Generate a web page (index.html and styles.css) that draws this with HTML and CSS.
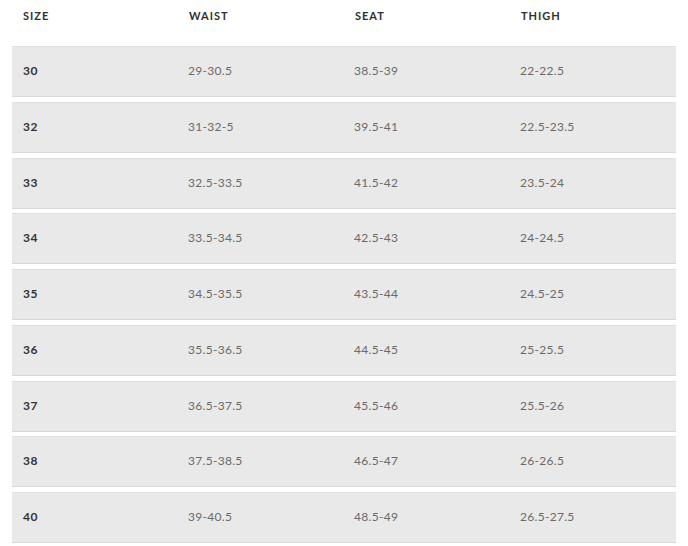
FILE: index.html
```html
<!DOCTYPE html>
<html>
<head>
<meta charset="utf-8">
<link rel="stylesheet" href="styles.css">
</head>
<body>
<div class="chart">
  <div class="head">
    <div class="cell">SIZE</div>
    <div class="cell">WAIST</div>
    <div class="cell">SEAT</div>
    <div class="cell">THIGH</div>
  </div>
  <div class="rows">
    <div class="row"><div class="cell size">30</div><div class="cell">29-30.5</div><div class="cell">38.5-39</div><div class="cell">22-22.5</div></div>
    <div class="row"><div class="cell size">32</div><div class="cell">31-32-5</div><div class="cell">39.5-41</div><div class="cell">22.5-23.5</div></div>
    <div class="row"><div class="cell size">33</div><div class="cell">32.5-33.5</div><div class="cell">41.5-42</div><div class="cell">23.5-24</div></div>
    <div class="row"><div class="cell size">34</div><div class="cell">33.5-34.5</div><div class="cell">42.5-43</div><div class="cell">24-24.5</div></div>
    <div class="row"><div class="cell size">35</div><div class="cell">34.5-35.5</div><div class="cell">43.5-44</div><div class="cell">24.5-25</div></div>
    <div class="row"><div class="cell size">36</div><div class="cell">35.5-36.5</div><div class="cell">44.5-45</div><div class="cell">25-25.5</div></div>
    <div class="row"><div class="cell size">37</div><div class="cell">36.5-37.5</div><div class="cell">45.5-46</div><div class="cell">25.5-26</div></div>
    <div class="row"><div class="cell size">38</div><div class="cell">37.5-38.5</div><div class="cell">46.5-47</div><div class="cell">26-26.5</div></div>
    <div class="row"><div class="cell size">40</div><div class="cell">39-40.5</div><div class="cell">48.5-49</div><div class="cell">26.5-27.5</div></div>
  </div>
</div>
</body>
</html>
```
FILE: styles.css
```css
html, body {
  margin: 0;
  padding: 0;
  background: #ffffff;
}
body {
  font-family: Lato, "Open Sans", "Liberation Sans", sans-serif;
}
.chart {
  width: 664px;
  margin-left: 12px;
}
.head {
  display: grid;
  grid-template-columns: repeat(4, 1fr);
  height: 46px;
  align-items: start;
}
.head .cell {
  padding: 9px 0 0 11px;
  font-size: 11px;
  font-weight: 700;
  letter-spacing: 1px;
  color: #2f3033;
}
.rows {
  display: flex;
  flex-direction: column;
  gap: 4.75px;
}
.row {
  display: grid;
  grid-template-columns: repeat(4, 1fr);
  align-items: center;
  height: 49px;
  background: #e9e9e9;
  border-top: 1px solid #dedede;
  border-bottom: 1px solid #d9d9d9;
}
.row .cell {
  padding-left: 10px;
  padding-bottom: 2px;
  font-size: 12px;
  letter-spacing: 0.3px;
  color: #6a6a6a;
}
.row .cell.size {
  padding-left: 11px;
  font-weight: 700;
  color: #333437;
  letter-spacing: 0.6px;
}
```
